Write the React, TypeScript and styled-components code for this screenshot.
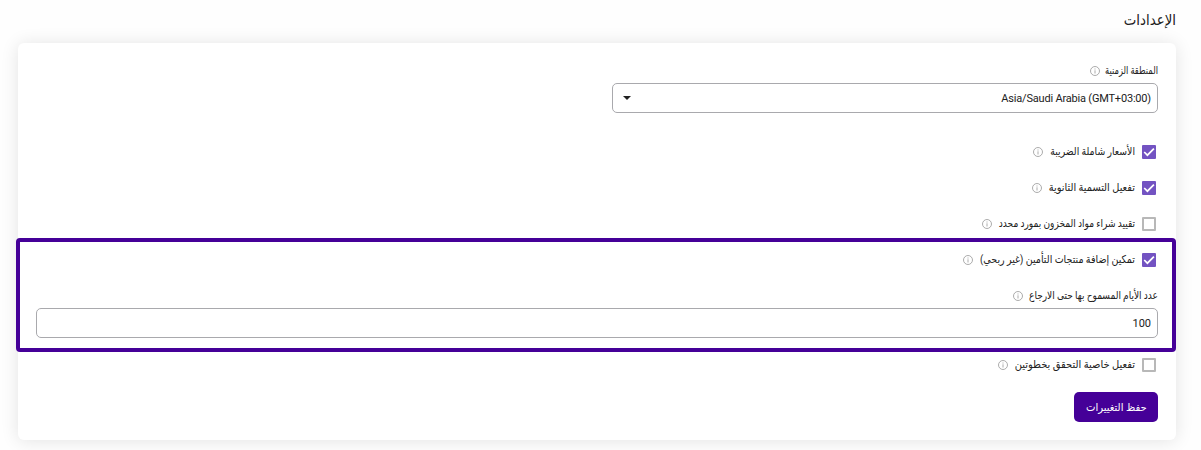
import React from 'react';
import styled, { createGlobalStyle } from 'styled-components';

const GlobalStyle = createGlobalStyle`
  *, *::before, *::after { box-sizing: border-box; }
  body {
    margin: 0;
    background: #fefefe;
    color: #212121;
    font-family: Roboto, 'DejaVu Sans', sans-serif;
    overflow: hidden;
  }
`;

const Page = styled.main`
  direction: rtl;
  height: 450px;
  padding: 0 25px 0 18px;
`;

const Title = styled.h1`
  margin: 0;
  height: 43px;
  padding-top: 8px;
  font-size: 15px;
  font-weight: 400;
  line-height: 24px;
  transform: scaleX(0.89);
  transform-origin: right;
`;

const Card = styled.section`
  height: 397px;
  padding: 19px 18px 0 18px;
  border-radius: 6px;
  background: #fff;
  box-shadow: 0 1px 18px rgba(0, 0, 0, 0.11);
`;

const FieldLabel = styled.div`
  display: flex;
  align-items: center;
  gap: 5px;
  height: 18px;
`;

const Caption = styled.span<{ $width: number; $condense?: number }>`
  width: ${({ $width }) => $width}px;
  font-size: 11px;
  line-height: 18px;
  white-space: nowrap;
  transform: scaleX(${({ $condense = 1 }) => $condense});
  transform-origin: right;
`;

const Select = styled.div`
  display: flex;
  align-items: center;
  justify-content: space-between;
  width: 546px;
  height: 30px;
  margin-top: 3px;
  padding: 0 6px 0 10px;
  border: 1px solid #a9a9ad;
  border-radius: 5px;
  font-size: 11px;
  letter-spacing: -0.19px;
`;

const Caret = styled.span`
  border: 4px solid transparent;
  border-top-color: #212121;
  border-bottom: 0;
`;

const Options = styled.div`
  display: flex;
  flex-direction: column;
  gap: 18px;
  padding: 30px 2px 0 0;
`;

const Option = styled.div`
  display: flex;
  align-items: center;
  gap: 5px;
  height: 18px;
`;

const Box = styled.span<{ $checked?: boolean }>`
  display: flex;
  width: 14px;
  height: 14px;
  margin-left: 2px;
  border: 2px solid ${({ $checked }) => ($checked ? '#7353c2' : '#b8b8b8')};
  border-radius: 1px;
  background: ${({ $checked }) => ($checked ? '#7353c2' : '#fff')};
  svg { margin: -2px; flex: none; }
`;

const Highlighted = styled.div`
  position: relative;
  height: 114px;
  margin-top: 5px;
  padding-top: 13px;
`;

const Frame = styled.div`
  position: absolute;
  inset: 0 -18px 0 -20px;
  border: 4px solid #450098;
  border-radius: 4px;
`;

const DaysLabel = styled(FieldLabel)`
  margin-top: 18px;
`;

const Input = styled.div`
  height: 30px;
  margin-top: 3px;
  padding: 0 6px;
  border: 1px solid #a9a9ad;
  border-radius: 5px;
  font-size: 11px;
  line-height: 29px;
`;

const Inset = styled.div<{ $top?: number }>`
  padding: ${({ $top = 0 }) => $top}px 2px 0 0;
`;

const SaveButton = styled.button`
  display: flex;
  align-items: center;
  justify-content: center;
  width: 84px;
  height: 30px;
  margin: 18px 0 0;
  padding: 0;
  border: 0;
  border-radius: 5px;
  background: #450098;
  color: #fff;
  font-family: inherit;
  font-size: 11px;
  white-space: nowrap;
`;

const ButtonText = styled.span`
  transform: scaleX(0.91);
`;

const Info = () => (
  <svg width="10" height="10" viewBox="0 0 10 10" fill="none" stroke="#a3a3a3">
    <circle cx="5" cy="5" r="4.5" strokeWidth="0.9" />
    <path d="M5 4.3v3.2M5 2.5v1" strokeWidth="0.9" />
  </svg>
);

type CheckProps = { text: string; width: number; condense?: number; checked?: boolean };

const Check = ({ text, width, condense, checked }: CheckProps) => (
  <Option>
    <Box $checked={checked}>
      {checked && (
        <svg width="14" height="14" viewBox="0 0 14 14" fill="none" stroke="#fff" strokeWidth="1.7">
          <path d="M2.2 7l3.2 3.2 6.5-6.5" />
        </svg>
      )}
    </Box>
    <Caption $width={width} $condense={condense}>{text}</Caption>
    <Info />
  </Option>
);

export default function App() {
  return (
    <>
      <GlobalStyle />
      <Page>
        <Title>الإعدادات</Title>
        <Card>
          <FieldLabel>
            <Caption $width={53} $condense={0.755}>المنطقة الزمنية</Caption>
            <Info />
          </FieldLabel>
          <Select>
            <bdi dir="ltr">Asia/Saudi Arabia (GMT+03:00)</bdi>
            <Caret />
          </Select>
          <Options>
            <Check text="الأسعار شاملة الضريبة" width={87} condense={0.845} checked />
            <Check text="تفعيل التسمية الثانوية" width={88} condense={0.89} checked />
            <Check text="تقييد شراء مواد المخزون بمورد محدد" width={138} condense={0.82} />
          </Options>
          <Highlighted>
            <Inset>
              <Check text="تمكين إضافة منتجات التأمين (غير ربحي)" width={157} condense={0.865} checked />
            </Inset>
            <DaysLabel>
              <Caption $width={130} $condense={0.82}>عدد الأيام المسموح بها حتى الارجاع</Caption>
              <Info />
            </DaysLabel>
            <Input>100</Input>
            <Frame />
          </Highlighted>
          <Inset $top={4}>
            <Check text="تفعيل خاصية التحقق بخطوتين" width={122} condense={0.9} />
          </Inset>
          <SaveButton>
            <ButtonText>حفظ التغييرات</ButtonText>
          </SaveButton>
        </Card>
      </Page>
    </>
  );
}
